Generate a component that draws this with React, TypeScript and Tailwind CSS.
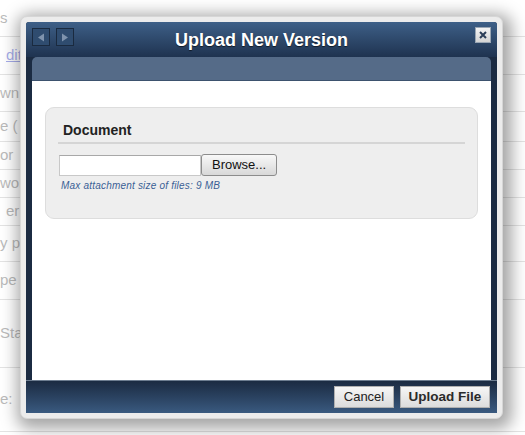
import React from 'react';

const rows = [
  { h: 37, t: 's', link: false },
  { h: 38, t: 'dit', link: true },
  { h: 37, t: 'wn', link: false },
  { h: 30, t: 'e (', link: false },
  { h: 28, t: 'or', link: false },
  { h: 28, t: 'wor', link: false },
  { h: 28, t: 'er', link: false },
  { h: 36, t: 'y p', link: false },
  { h: 38, t: 'pe', link: false },
  { h: 68, t: 'Sta', link: false },
  { h: 64, t: 'e:', link: false },
];

export default function App() {
  return (
    <div
      className="relative w-[525px] h-[435px] bg-white overflow-hidden"
      style={{ fontFamily: '"Liberation Sans", Arial, sans-serif' }}
    >
      {/* background page, faded behind the modal */}
      <div className="flex flex-col opacity-40">
        {rows.map((r, i) => (
          <div
            key={i}
            className="flex items-center border-b border-[#bbbbbb] pl-[3px]"
            style={{ height: r.h }}
          >
            <span
              className={
                r.link
                  ? 'text-[15px] text-[#2233cc] underline'
                  : 'text-[15px] text-[#555555]'
              }
              style={{ marginLeft: r.t === 'dit' || r.t === 'er' ? 3 : -3 }}
            >
              {r.t}
            </span>
          </div>
        ))}
      </div>

      {/* modal */}
      <div className="absolute left-[20px] top-[16px] w-[483px] h-[403px] rounded-[7px] bg-[#ececec] border border-[#d6d6d6] p-[5px] shadow-[3px_4px_16px_6px_rgba(0,0,0,0.35)]">
        <div className="flex flex-col h-full rounded-t-[3px] bg-[#1b2b42]">
          {/* title bar */}
          <div className="relative flex items-center justify-center h-[35px] shrink-0 rounded-t-[3px] bg-gradient-to-b from-[#3e6088] to-[#1f3350]">
            <div className="absolute left-[6px] top-[6px] flex gap-[6px]">
              <div className="w-[18px] h-[18px] border border-[#1a2a3f] bg-[#2f4c6f] flex items-center justify-center">
                <svg width="8" height="9" viewBox="0 0 8 9">
                  <path d="M7 0.5 L1 4.5 L7 8.5 Z" fill="#7f93ad" />
                </svg>
              </div>
              <div className="w-[18px] h-[18px] border border-[#1a2a3f] bg-[#2f4c6f] flex items-center justify-center">
                <svg width="8" height="9" viewBox="0 0 8 9">
                  <path d="M1 0.5 L7 4.5 L1 8.5 Z" fill="#7f93ad" />
                </svg>
              </div>
            </div>
            <span className="text-[18px] font-bold text-white mt-[1px] [text-shadow:0_1px_1px_rgba(0,0,0,0.6)]">
              Upload New Version
            </span>
            <div className="absolute right-[6px] top-[5px] w-[16px] h-[16px] bg-gradient-to-b from-[#f4f4f4] to-[#d4d4d4] border border-[#9aa6b4] flex items-center justify-center">
              <svg width="8" height="8" viewBox="0 0 8 8">
                <path d="M1 1 L7 7 M7 1 L1 7" stroke="#2c3e58" strokeWidth="2" />
              </svg>
            </div>
          </div>

          {/* content */}
          <div className="flex flex-col mx-[6px] grow">
            <div className="h-[24px] rounded-t-[5px] bg-[#556b88] border-b border-[#3d526e]" />
            <div className="grow bg-white px-[13px] pt-[26px]">
              <div className="h-[112px] rounded-[9px] border border-[#dddddd] bg-[#eeeeee] px-[12px] pt-[13px]">
                <div className="text-[14px] font-bold leading-[18px] text-[#222222] pl-[5px] pb-[3px] border-b-2 border-[#d5d5d5]">
                  Document
                </div>
                <div className="flex items-center mt-[10px] pl-[1px]">
                  <div className="w-[142px] h-[21px] bg-white border border-[#c8c8c8] border-t-[#a8a8a8]" />
                  <div className="h-[22px] px-[10px] flex items-center rounded-[3px] border border-[#8c8c8c] bg-gradient-to-b from-[#f8f8f8] to-[#d8d8d8] text-[13px] text-[#111111]">
                    Browse...
                  </div>
                </div>
                <div className="mt-[2px] pl-[3px] text-[10px] tracking-[0.2px] italic text-[#3a5f95]">
                  Max attachment size of files: 9 MB
                </div>
              </div>
            </div>
          </div>

          {/* footer */}
          <div className="h-[33px] shrink-0 flex items-center justify-end gap-[6px] pr-[7px] bg-gradient-to-b from-[#1b2b42] to-[#3a5a80] border-t border-[#6d7d90]">
            <div className="h-[22px] w-[60px] flex items-center justify-center bg-gradient-to-b from-[#f6f6f6] to-[#dcdcdc] border border-[#b0b0b0] text-[13px] text-[#222222]">
              Cancel
            </div>
            <div className="h-[22px] w-[90px] flex items-center justify-center bg-gradient-to-b from-[#f6f6f6] to-[#dcdcdc] border border-[#b0b0b0] text-[13.5px] font-bold text-[#2a2a2a]">
              Upload File
            </div>
          </div>
        </div>
      </div>
    </div>
  );
}
